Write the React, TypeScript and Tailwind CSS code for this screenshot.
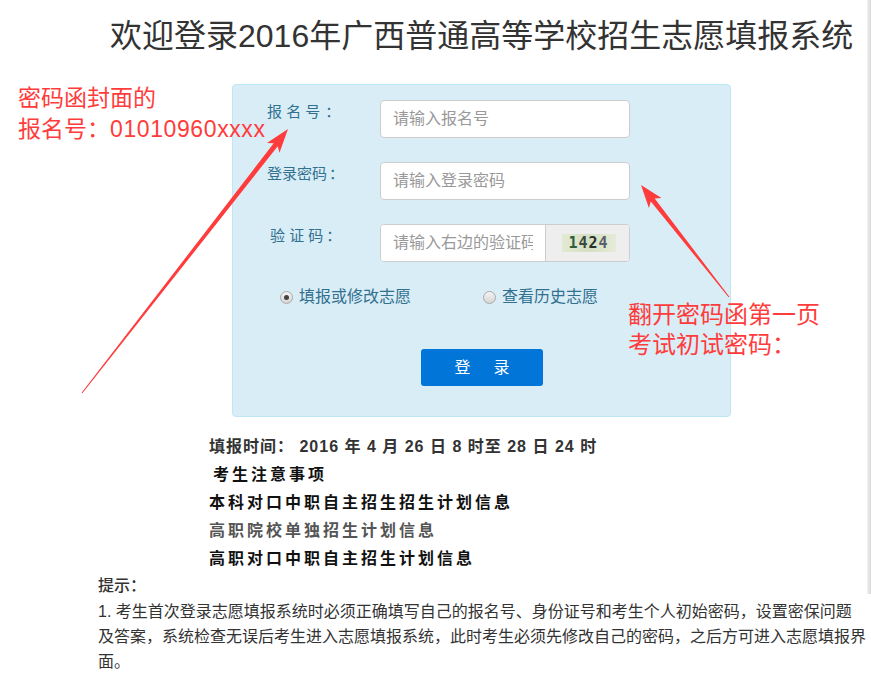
import React from "react";

function arrowPoints(
  tx: number,
  ty: number,
  px: number,
  py: number,
  L: number,
  W: number,
  w1: number,
  w0: number
) {
  const dx = px - tx;
  const dy = py - ty;
  const len = Math.hypot(dx, dy);
  const ux = dx / len;
  const uy = dy / len;
  const nx = -uy;
  const ny = ux;
  const bx = px - ux * L;
  const by = py - uy * L;
  const pts: [number, number][] = [
    [tx + (nx * w0) / 2, ty + (ny * w0) / 2],
    [bx + (nx * w1) / 2, by + (ny * w1) / 2],
    [bx + nx * W - ux * 4, by + ny * W - uy * 4],
    [px, py],
    [bx - nx * W - ux * 4, by - ny * W - uy * 4],
    [bx - (nx * w1) / 2, by - (ny * w1) / 2],
    [tx - (nx * w0) / 2, ty - (ny * w0) / 2],
  ];
  return pts.map((p) => p.map((v) => v.toFixed(1)).join(",")).join(" ");
}

function Radio({ checked }: { checked?: boolean }) {
  return (
    <span className="flex h-[13px] w-[13px] items-center justify-center rounded-full border border-[#a9a9a9] bg-gradient-to-b from-[#f4f4f4] to-[#d6d6d6]">
      {checked ? <span className="h-[5px] w-[5px] rounded-full bg-[#444]" /> : null}
    </span>
  );
}

export default function App() {
  return (
    <div className="relative h-[673px] w-[871px] overflow-hidden bg-white font-['Liberation_Sans','Noto_Sans_CJK_SC',sans-serif] text-[#333]">
      <h1 className="whitespace-nowrap pl-[110px] pt-[16px] text-[32px] font-normal leading-[40px] text-[#333]">
        欢迎登录2016年广西普通高等学校招生志愿填报系统
      </h1>

      <div className="ml-[232px] mt-[28px] h-[333px] w-[499px] rounded-[4px] border border-[#bce8f1] bg-[#d9edf7] pl-[34px] pt-[15px]">
        <div className="flex items-start">
          <div className="w-[113px] pt-[3px] text-[15px] leading-[18px] text-[#31708f]">
            报 名 号<span className="ml-[5px]">：</span>
          </div>
          <input
            className="h-[38px] w-[250px] rounded-[4px] border border-[#ccc] bg-white px-[12px] text-[16px] text-[#555] outline-none placeholder:text-[#999]"
            placeholder="请输入报名号"
          />
        </div>
        <div className="mt-[24px] flex items-start">
          <div className="w-[113px] pt-[3px] text-[15px] leading-[18px] text-[#31708f]">
            登录密码<span className="ml-[2px]">：</span>
          </div>
          <input
            className="h-[38px] w-[250px] rounded-[4px] border border-[#ccc] bg-white px-[12px] text-[16px] text-[#555] outline-none placeholder:text-[#999]"
            placeholder="请输入登录密码"
          />
        </div>
        <div className="mt-[24px] flex items-start">
          <div className="w-[113px] pl-[3px] pt-[3px] text-[15px] leading-[18px] text-[#31708f]">
            验 证 码<span className="ml-[3px]">：</span>
          </div>
          <div className="flex h-[38px] w-[250px] overflow-hidden rounded-[4px] border border-[#ccc] bg-white">
            <input
              className="h-full w-[164px] bg-white px-[12px] text-[16px] text-[#555] outline-none placeholder:text-[#999]"
              placeholder="请输入右边的验证码"
            />
            <div className="flex flex-1 items-center justify-center border-l border-[#ccc] bg-[#eee] pl-[2px]">
              <div className="flex h-[18px] w-[54px] items-center justify-center bg-gradient-to-r from-[#e3ead2] via-[#d5dfc3] to-[#e6ebd8] font-['DejaVu_Sans_Mono',monospace] text-[15px] font-bold leading-[18px] tracking-[1px]">
                <span className="text-[#2f5d3a]">1</span>
                <span className="text-[#3b4a3c]">4</span>
                <span className="text-[#26302a]">2</span>
                <span className="text-[#5a6168]">4</span>
              </div>
            </div>
          </div>
        </div>

        <div className="ml-[13px] mt-[26px] flex items-center text-[16px] leading-[18px] text-[#31708f]">
          <div className="flex w-[203px] items-center gap-[6px]">
            <Radio checked />
            <span>填报或修改志愿</span>
          </div>
          <div className="flex items-center gap-[6px]">
            <Radio />
            <span>查看历史志愿</span>
          </div>
        </div>

        <button className="ml-[154px] mt-[43px] flex h-[37px] w-[122px] items-center justify-center rounded-[3px] bg-[#0275d8] text-[16px] text-white">
          <span>登</span>
          <span className="ml-[23px]">录</span>
        </button>
      </div>

      <div className="ml-[209px] mt-[16px] text-[16px] font-bold leading-[28px]">
        <div className="tracking-[1px] text-[#333]">填报时间： 2016 年 4 月 26 日 8 时至 28 日 24 时</div>
        <div className="pl-[4px] tracking-[3px] text-[#111]">考生注意事项</div>
        <div className="tracking-[3px] text-[#111]">本科对口中职自主招生招生计划信息</div>
        <div className="tracking-[3px] text-[#555]">高职院校单独招生计划信息</div>
        <div className="tracking-[3px] text-[#111]">高职对口中职自主招生计划信息</div>
      </div>

      <div className="ml-[98px] w-[780px] text-[#333]">
        <div className="text-[16px] font-medium leading-[26px]">提示：</div>
        <p className="text-[16px] leading-[25px]">
          1. 考生首次登录志愿填报系统时必须正确填写自己的报名号、身份证号和考生个人初始密码，设置密保问题
          <br />
          及答案，系统检查无误后考生进入志愿填报系统，此时考生必须先修改自己的密码，之后方可进入志愿填报界
          <br />
          面。
        </p>
      </div>

      {/* annotations overlay */}
      <div className="absolute left-[18px] top-[83px] text-[23px] leading-[31px] text-[#ff3c3c]">
        <div>密码函封面的</div>
        <div>
          报名号：<span className="tracking-[0.6px]">01010960xxxx</span>
        </div>
      </div>
      <div className="absolute left-[628px] top-[300px] text-[24px] leading-[30px] text-[#ff3c3c]">
        <div>翻开密码函第一页</div>
        <div>考试初试密码：</div>
      </div>
      <svg className="pointer-events-none absolute left-0 top-0" width="871" height="673">
        <polygon points={arrowPoints(82, 393, 288, 129, 20, 8, 5, 1)} fill="#ff3c3c" />
        <polygon points={arrowPoints(729, 297, 641, 185, 19, 8, 5, 1)} fill="#ff3c3c" />
      </svg>
      <div className="absolute right-0 top-0 h-[594px] w-[4px] bg-gradient-to-r from-[#f2f2f2] to-[#d8d8d8]" />
    </div>
  );
}
